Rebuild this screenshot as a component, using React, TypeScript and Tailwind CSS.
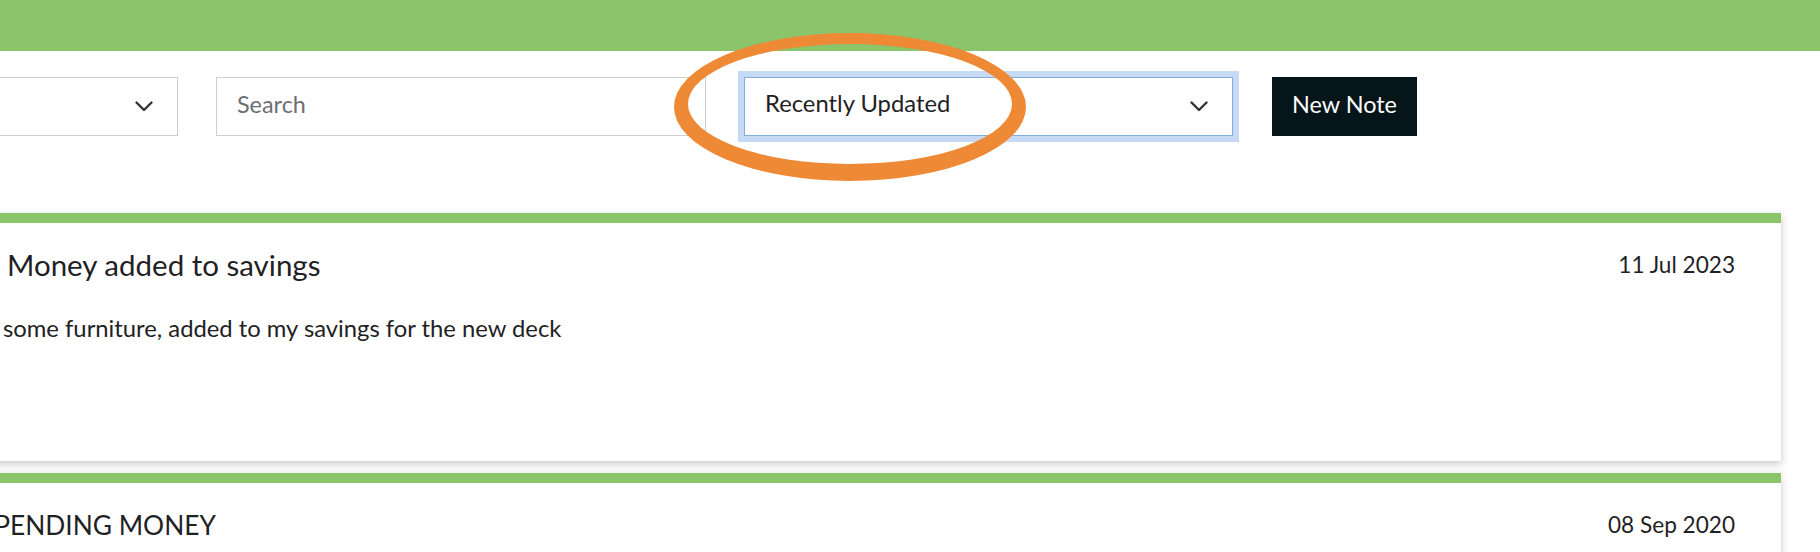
import React from 'react';

const Chevron = () => (
  <svg width="18" height="11" viewBox="0 0 18 11" fill="none" className="shrink-0">
    <path d="M1.5 1.5 L9 9 L16.5 1.5" stroke="#333" strokeWidth="2.4" strokeLinecap="round" strokeLinejoin="round" />
  </svg>
);

interface NoteProps {
  title: string;
  date: string;
  body?: string;
  titleClass: string;
}

const NoteCard: React.FC<NoteProps> = ({ title, date, body, titleClass }) => (
  <div className="bg-white border-t-[10px] border-[#8bc46a] shadow-[0_3px_8px_rgba(0,0,0,0.22)] h-[248px] pl-[310px] pr-[46px] pt-[25px]">
    <div className="flex items-center justify-between">
      <h2 className={`leading-[34px] text-[#1f2224] ${titleClass}`}>{title}</h2>
      <span className="text-[22.6px] leading-[34px] text-[#1f2224]">{date}</span>
    </div>
    {body && <p className="mt-[30px] ml-[23px] text-[23.8px] leading-[32px] text-[#1f2224]">{body}</p>}
  </div>
);

export default function App() {
  return (
    <div className="relative h-[552px] w-full overflow-hidden bg-white font-['Lato','Noto_Sans',sans-serif]">
      <header className="h-[51px] bg-[#8bc46a]" />

      <div className="-ml-[330px] w-[2111px] flex flex-col">
        {/* Filter row */}
        <div className="mt-[26px] flex items-center gap-[38px]">
          <div className="w-[508px] h-[59px] border border-[#cfcfcf] bg-white flex items-center justify-end pr-[24px]">
            <Chevron />
          </div>
          <div className="w-[490px] h-[59px] border border-[#cfcfcf] bg-white flex items-center pl-[20px] pb-[4px] text-[23.4px] text-[#6c6f72]">
            Search
          </div>
          <div className="w-[489px] h-[59px] border border-[#86aadf] shadow-[0_0_0_6px_#c6daf6] bg-white flex items-center justify-between pl-[20px] pr-[24px] text-[23.8px] text-[#1f2224]">
            <span className="pb-[5px]">Recently Updated</span>
            <Chevron />
          </div>
          <button className="ml-[1px] w-[145px] h-[59px] pb-[4px] bg-[#06151a] text-white text-[23.4px] flex items-center justify-center">
            New Note
          </button>
        </div>

        {/* Notes */}
        <div className="mt-[77px] flex flex-col gap-[12px]">
          <NoteCard
            title="Money added to savings"
            titleClass="ml-[27px] text-[29.5px]"
            date="11 Jul 2023"
            body="some furniture, added to my savings for the new deck"
          />
          <NoteCard title="SPENDING MONEY" titleClass="text-[26.3px]" date="08 Sep 2020" />
        </div>
      </div>

      {/* annotation circle */}
      <svg className="absolute left-[673px] top-[33px] pointer-events-none" width="356" height="150" viewBox="0 0 356 150" fill="none">
        <path
          fillRule="evenodd"
          fill="#ee8a35"
          d="M1 74 A176 74 0 1 0 353 74 A176 74 0 1 0 1 74 Z M15 71 A162 60 0 1 1 339 71 A162 60 0 1 1 15 71 Z"
        />
      </svg>
    </div>
  );
}
